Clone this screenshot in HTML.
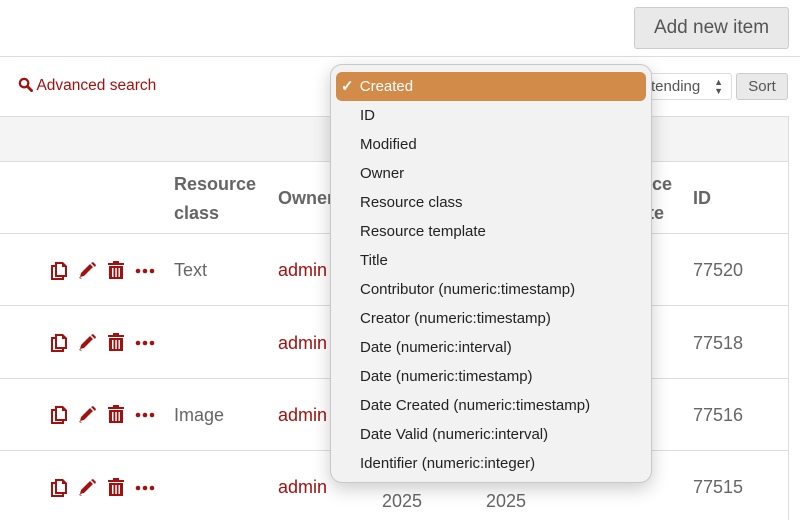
<!DOCTYPE html>
<html><head><meta charset="utf-8"><style>
*{margin:0;padding:0;box-sizing:border-box}
body{width:800px;height:520px;overflow:hidden;background:#fff;font-family:"Liberation Sans",sans-serif;position:relative;color:#555}
.a{position:absolute;white-space:nowrap}
.hl{background:#ddd;height:1px;position:absolute}
.th{font-weight:bold;font-size:18px;color:#666;line-height:29px}
.td{font-size:18px;color:#666}
.td.red,.red{color:#a3110f}
.menu{position:absolute;left:330px;top:64px;width:322px;height:419px;background:#f2f2f2;border:1px solid #c8c8c8;border-radius:12px;box-shadow:0 6px 18px rgba(0,0,0,0.2)}
.mi{position:absolute;left:29px;font-size:15px;color:#222;line-height:18px}
</style></head><body>
<div class="a" style="left:634px;top:7px;width:155px;height:42px;background:#e9e9e9;border:1px solid #ccc;border-radius:3px;font-size:19px;color:#555;text-align:center;line-height:40px">Add new item</div>
<div class="hl" style="left:0;top:56px;width:800px"></div>
<div class="a red" style="left:18px;top:77px;font-size:15.5px">
<svg width="15" height="15" viewBox="0 0 16 16" style="vertical-align:-2px"><circle cx="6.5" cy="6.5" r="4.5" fill="none" stroke="#a3110f" stroke-width="2.4"/><path d="M10 10l4.5 4.5" stroke="#a3110f" stroke-width="3" stroke-linecap="round"/></svg> Advanced search</div>
<div class="a" style="left:640px;top:73px;width:92px;height:27px;border:1px solid #ddd;border-radius:3px;font-size:15px;line-height:25px;padding-left:10px;color:#555">tending <span style="position:absolute;right:8px;top:0;font-size:9px;line-height:9px;padding-top:4px">▲<br>▼</span></div>
<div class="a" style="left:736px;top:73px;width:52px;height:27px;background:#e9e9e9;border:1px solid #ccc;border-radius:3px;font-size:15px;line-height:25px;text-align:center">Sort</div>
<div class="a" style="left:0;top:116px;width:789px;height:46px;background:#f4f4f4;border-top:1px solid #ddd;border-right:1px solid #ddd;border-bottom:1px solid #ddd"></div>
<div class="a" style="left:788px;top:162px;width:1px;height:358px;background:#ddd"></div>
<div class="hl" style="left:0;top:233px;width:789px"></div>
<div class="hl" style="left:0;top:305px;width:789px"></div>
<div class="hl" style="left:0;top:378px;width:789px"></div>
<div class="hl" style="left:0;top:450px;width:789px"></div>
<div class="a th" style="left:174px;top:170px">Resource<br>class</div>
<div class="a th" style="left:278px;top:184px">Owner</div>
<div class="a th" style="left:590px;top:170px">Resource<br>template</div>
<div class="a th" style="left:693px;top:184px">ID</div>
<div class="a td" style="left:174px;top:260px">Text</div>
<div class="a td" style="left:174px;top:405px">Image</div>
<div class="a td red" style="left:278px;top:260px">admin</div>
<div class="a td red" style="left:278px;top:333px">admin</div>
<div class="a td red" style="left:278px;top:405px">admin</div>
<div class="a td red" style="left:278px;top:477px">admin</div>
<div class="a td" style="left:382px;top:491px">2025</div>
<div class="a td" style="left:486px;top:491px">2025</div>
<div class="a td" style="left:693px;top:260px">77520</div>
<div class="a td" style="left:693px;top:333px">77518</div>
<div class="a td" style="left:693px;top:405px">77516</div>
<div class="a td" style="left:693px;top:477px">77515</div>
<svg class="a" style="left:50px;top:261px" width="106" height="20" viewBox="0 0 106 20">
<g id="ic" fill="#a3110f">
<path d="M1 4h4v2H3v11h9v-2h2v4H1z"/><path d="M5 1h8l4 4v11H5z M7 3v11h8V6h-3V3z" fill-rule="evenodd"/>
<path d="M30 16l1-4 9-9 3 3-9 9z M29 17l1-1 2 2z" />
<path d="M41 2l2-1 3 3-1 2z"/>
<rect x="58" y="2" width="16" height="2"/><rect x="63" y="0" width="6" height="2"/><path d="M59 5h14v13H59z M62 7v9h1.5V7z M65.3 7v9h1.5V7z M68.5 7v9h1.5V7z" fill-rule="evenodd"/>
<circle cx="88" cy="10" r="2.3"/><circle cx="95" cy="10" r="2.3"/><circle cx="102" cy="10" r="2.3"/>
</g></svg>
<svg class="a" style="left:50px;top:333px" width="106" height="20"><use href="#ic"/></svg>
<svg class="a" style="left:50px;top:405px" width="106" height="20"><use href="#ic"/></svg>
<svg class="a" style="left:50px;top:478px" width="106" height="20"><use href="#ic"/></svg>
<div class="menu">
<div class="a" style="left:5px;top:7px;width:310px;height:29px;background:#d38b4a;border-radius:6px"></div>
<div class="mi" style="left:10px;top:13px;color:#fff;font-weight:bold">✓ <span style="font-weight:normal;margin-left:2px">Created</span></div>
<div class="mi" style="top:42px">ID</div>
<div class="mi" style="top:71px">Modified</div>
<div class="mi" style="top:100px">Owner</div>
<div class="mi" style="top:129px">Resource class</div>
<div class="mi" style="top:158px">Resource template</div>
<div class="mi" style="top:187px">Title</div>
<div class="mi" style="top:216px">Contributor (numeric:timestamp)</div>
<div class="mi" style="top:245px">Creator (numeric:timestamp)</div>
<div class="mi" style="top:274px">Date (numeric:interval)</div>
<div class="mi" style="top:303px">Date (numeric:timestamp)</div>
<div class="mi" style="top:332px">Date Created (numeric:timestamp)</div>
<div class="mi" style="top:361px">Date Valid (numeric:interval)</div>
<div class="mi" style="top:390px">Identifier (numeric:integer)</div>
</div>
</body></html>
